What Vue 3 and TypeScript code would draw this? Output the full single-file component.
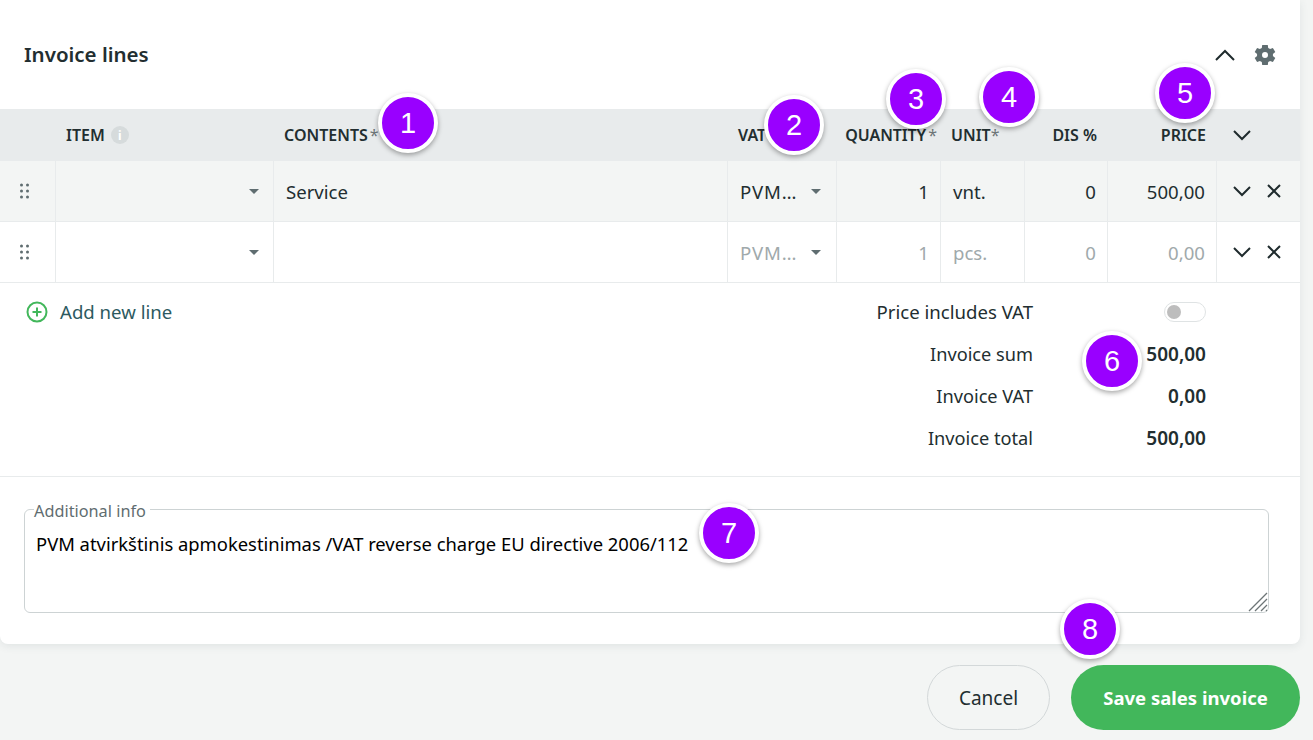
<script setup lang="ts">
interface Line { content: string; vat: string; qty: string; unit: string; dis: string; price: string; filled: boolean }
const lines: Line[] = [
  { content: 'Service', vat: 'PVM…', qty: '1', unit: 'vnt.', dis: '0', price: '500,00', filled: true },
  { content: '', vat: 'PVM…', qty: '1', unit: 'pcs.', dis: '0', price: '0,00', filled: false },
]
const totals = [
  { label: 'Invoice sum', value: '500,00' },
  { label: 'Invoice VAT', value: '0,00' },
  { label: 'Invoice total', value: '500,00' },
]
const callouts = [
  { n: 1, x: 408, y: 123 }, { n: 2, x: 794, y: 125 }, { n: 3, x: 916, y: 99 }, { n: 4, x: 1009, y: 97 },
  { n: 5, x: 1185, y: 93 }, { n: 6, x: 1112, y: 361 }, { n: 7, x: 729, y: 533 }, { n: 8, x: 1090, y: 629 },
]
const pos = (c: { x: number; y: number }) => ({ left: c.x - 30 + 'px', top: c.y - 30 + 'px' })
</script>

<template>
  <div class="page">
    <section class="card">
      <header class="head">
        <h2>Invoice lines</h2>
        <div class="head-icons">
          <svg width="24" height="24" viewBox="0 0 24 24" fill="none" stroke="#1f2b2d" stroke-width="2"><path d="M3 17 12 8l9 9" /></svg>
          <svg width="24" height="24" viewBox="0 0 24 24" fill="#5f6d70"><path fill-rule="evenodd" d="M19.900 13.100a8 8 0 0 0 0-2.200l2.400-1.800-2.400-4.200-2.800 1.100a8 8 0 0 0-1.900-1.100L14.800 2h-5.600l-.4 2.900a8 8 0 0 0-1.900 1.100L4.100 4.900 1.700 9.100l2.400 1.800a8 8 0 0 0 0 2.200l-2.400 1.800 2.400 4.200 2.800-1.100a8 8 0 0 0 1.900 1.100l.4 2.900h5.600l.4-2.900a8 8 0 0 0 1.900-1.100l2.800 1.100 2.400-4.200ZM12 15a3 3 0 1 1 0-6 3 3 0 0 1 0 6Z" /></svg>
        </div>
      </header>

      <div class="grid thead">
        <div></div>
        <div class="th item">ITEM <span class="info">i</span></div>
        <div class="th contents">CONTENTS<span class="req">*</span></div>
        <div class="th vat">VAT</div>
        <div class="th right qtyh"><span class="qty-label">QUANTITY</span><span class="req">*</span></div>
        <div class="th unith">UNIT<span class="req tight">*</span></div>
        <div class="th right">DIS %</div>
        <div class="th right">PRICE</div>
        <div class="th act">
          <svg width="20" height="12" viewBox="0 0 20 12" fill="none" stroke="#1f2b2d" stroke-width="2"><path d="m2 2 8 8 8-8" /></svg>
        </div>
      </div>

      <div v-for="(l, i) in lines" :key="i" class="grid row" :class="{ filled: l.filled, ghost: !l.filled }">
        <div class="cell handle">
          <svg width="9" height="16" viewBox="0 0 9 16" fill="#5f6d70"><circle cx="1.500" cy="2" r="1.500" /><circle cx="7.500" cy="2" r="1.500" /><circle cx="1.500" cy="8" r="1.500" /><circle cx="7.500" cy="8" r="1.500" /><circle cx="1.500" cy="14" r="1.500" /><circle cx="7.500" cy="14" r="1.500" /></svg>
        </div>
        <div class="cell sel"><span class="caret"></span></div>
        <div class="cell text">{{ l.content }}</div>
        <div class="cell sel vatc"><span class="val vat-val">{{ l.vat }}</span><span class="caret"></span></div>
        <div class="cell num val">{{ l.qty }}</div>
        <div class="cell text val">{{ l.unit }}</div>
        <div class="cell num val">{{ l.dis }}</div>
        <div class="cell num val">{{ l.price }}</div>
        <div class="cell acts">
          <svg width="20" height="12" viewBox="0 0 20 12" fill="none" stroke="#1f2b2d" stroke-width="2"><path d="m2 2 8 8 8-8" /></svg>
          <svg width="16" height="16" viewBox="0 0 16 16" fill="none" stroke="#1f2b2d" stroke-width="2"><path d="m2 2 12 12M14 2 2 14" /></svg>
        </div>
      </div>

      <div class="summary">
        <div class="add">
          <svg width="22" height="22" viewBox="0 0 22 22" fill="none" stroke="#42b75b" stroke-width="2"><circle cx="11" cy="11" r="9.500" /><path d="M11 6.500v9M6.500 11h9" /></svg>
          <span class="add-label">Add new line</span>
        </div>
        <div class="totals">
          <div class="t-row">
            <span class="t-label first">Price includes VAT</span>
            <span class="t-val"><span class="switch"><span class="knob"></span></span></span>
          </div>
          <div v-for="t in totals" :key="t.label" class="t-row">
            <span class="t-label sum">{{ t.label }}</span>
            <b class="t-val">{{ t.value }}</b>
          </div>
        </div>
      </div>

      <div class="info-wrap">
        <fieldset class="field">
          <legend>Additional info</legend>
          <div class="note">PVM atvirkštinis apmokestinimas /VAT reverse charge EU directive 2006/112</div>
          <svg class="grip" width="20" height="20" viewBox="0 0 20 20" stroke="#6d7577" stroke-width="1.300"><path d="M1 19 19 1M7 19 19 7M13 19l6-6M18 19l1-1" /></svg>
        </fieldset>
      </div>
    </section>

    <footer class="actions">
      <button class="cancel">Cancel</button>
      <button class="save">Save sales invoice</button>
    </footer>

    <div v-for="c in callouts" :key="c.n" class="callout" :style="pos(c)">{{ c.n }}</div>
  </div>
</template>

<style>
html, body { margin: 0; background: #f3f5f4; }
</style>

<style scoped>
.page { position: relative; width: 1313px; height: 740px; overflow: hidden; background: #f3f5f4; font-family: "Noto Sans", "Open Sans", sans-serif; color: #222e30; font-size: 18.6px; }
.card { width: 1300px; height: 644px; background: #fff; border-radius: 0 0 8px 8px; box-shadow: 0 2px 8px rgba(60, 80, 85, 0.1); display: flex; flex-direction: column; }
.head { height: 109px; display: flex; align-items: center; justify-content: space-between; padding: 0 23px 0 24px; box-sizing: border-box; }
.head h2 { margin: 0; padding-bottom: 2px; font-size: 20.500px; font-weight: 600; }
.head-icons { display: flex; gap: 16px; align-items: center; }
.grid { display: grid; grid-template-columns: 56px 218px 454px 109px 104px 84px 83px 109px 83px; }
.thead { height: 52px; background: #e8ebec; align-items: center; }
.th { font-size: 16px; font-weight: 600; color: #222e30; white-space: nowrap; }
.th.item { padding-left: 10px; display: flex; align-items: center; gap: 6px; }
.th.contents { padding-left: 10px; }
.th.vat { padding-left: 10px; }
.th.right { text-align: right; padding-right: 11px; }
.th.qtyh { padding-right: 4px; }
.qty-label { letter-spacing: -0.1px; }
.th.unith { padding-left: 10px; }
.req { color: #6d7577; font-weight: 400; margin-left: 2px; }
.req.tight { margin-left: 0; }
.info { width: 18px; height: 18px; border-radius: 50%; background: #d6dbdc; color: #fff; font-size: 12px; font-weight: 700; display: inline-flex; align-items: center; justify-content: center; }
.th.act { padding-left: 15px; display: flex; }
.row { height: 61px; border-bottom: 1px solid #e8ebec; box-sizing: border-box; }
.row.filled { background: #f3f5f4; }
.cell { display: flex; align-items: center; border-right: 1px solid #e8ebec; padding: 0 11px 0 12px; box-sizing: border-box; min-width: 0; }
.cell:last-child { border-right: 0; }
.handle { padding: 0 0 0 20px; }
.sel { justify-content: flex-end; padding-right: 14px; }
.vatc { justify-content: space-between; padding-right: 15px; }
.vat-val { letter-spacing: 0.8px; }
.caret { width: 0; height: 0; border-left: 5px solid transparent; border-right: 5px solid transparent; border-top: 5px solid #5f6d70; }
.num { justify-content: flex-end; }
.ghost .val { color: #a0a9ab; }
.acts { padding: 0 18px 0 15px; justify-content: space-between; }
.summary { flex: 1; display: flex; justify-content: space-between; padding: 8px 94px 0 26px; border-bottom: 1px solid #e8ebec; }
.add { display: flex; align-items: center; gap: 12px; height: 42px; color: #2d5a5f; }
.add-label { padding-bottom: 2px; }
.t-row { display: flex; height: 42px; align-items: center; justify-content: flex-end; }
.t-label { text-align: right; }
.t-label.first { padding-bottom: 2px; }
.t-label.sum { font-size: 18.200px; }
.t-val { width: 173px; display: flex; justify-content: flex-end; font-size: 19px; font-weight: 600; }
.switch { width: 42px; height: 20px; border: 1px solid #dfe3e4; border-radius: 10px; box-sizing: border-box; display: flex; align-items: center; padding-left: 2px; }
.knob { width: 14px; height: 14px; border-radius: 50%; background: #bdbdbd; }
.info-wrap { height: 167px; padding: 24px 31px 0 24px; box-sizing: border-box; }
.field { position: relative; margin: 0; height: 112px; box-sizing: border-box; border: 1px solid #cdd3d4; border-radius: 6px; padding: 0 11px; }
.field legend { position: relative; top: 2px; font-size: 16.300px; color: #5f6d70; padding: 0 4px 0 0; margin-left: -2px; line-height: 16px; }
.note { color: #000; font-size: 18.400px; margin-top: 14px; }
.grip { position: absolute; right: 0; bottom: 0; }
.actions { display: flex; justify-content: flex-end; gap: 21px; width: 1300px; margin-top: 21px; }
.actions button { height: 65px; border-radius: 33px; font-family: inherit; font-size: 18.500px; box-sizing: border-box; }
.actions .cancel { width: 123px; background: #f3f5f4; border: 1px solid #d3d8d9; color: #222e30; font-size: 19px; }
.save { width: 229px; background: #42b75b; border: 0; color: #fff; font-weight: 700; }
.callout { position: absolute; width: 60px; height: 60px; box-sizing: border-box; border: 4px solid #fff; border-radius: 50%; background: #9900ff; color: #fff; font-family: "Liberation Sans", Arial, sans-serif; font-size: 29px; display: flex; align-items: center; justify-content: center; box-shadow: 0 2px 5px rgba(0, 0, 0, 0.35); }
</style>
